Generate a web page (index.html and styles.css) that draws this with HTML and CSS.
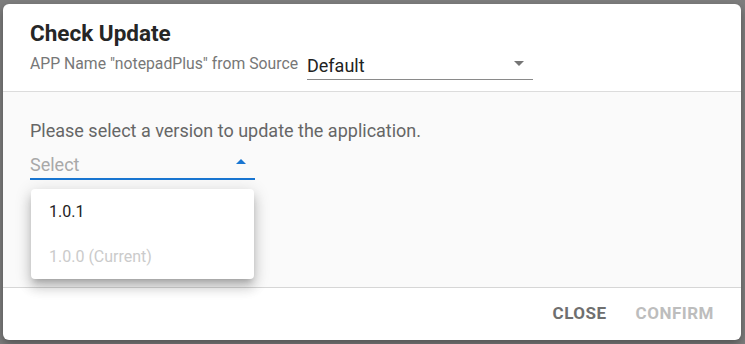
FILE: index.html
```html
<!DOCTYPE html>
<html>
<head>
<meta charset="utf-8">
<link rel="stylesheet" href="styles.css">
</head>
<body>
<div class="backdrop">
  <div class="dialog">
    <div class="head">
      <h2 class="title">Check Update</h2>
      <div class="source-row">
        <span class="source-label">APP Name "notepadPlus" from Source</span>
        <div class="source-select">
          <span>Default</span>
          <svg class="caret" width="10" height="5" viewBox="0 0 10 5"><path d="M0 0h10L5 5z" fill="#757575"/></svg>
        </div>
      </div>
    </div>
    <div class="body">
      <p class="prompt">Please select a version to update the application.</p>
      <div class="version-select">
        <span class="placeholder">Select</span>
        <svg class="caret up" width="10" height="5" viewBox="0 0 10 5"><path d="M0 5h10L5 0z" fill="#1976d2"/></svg>
      </div>
      <ul class="menu">
        <li class="item">1.0.1</li>
        <li class="item disabled">1.0.0 (Current)</li>
      </ul>
    </div>
    <div class="actions">
      <button class="btn">CLOSE</button>
      <button class="btn muted">CONFIRM</button>
    </div>
  </div>
</div>
</body>
</html>
```
FILE: styles.css
```css
* { box-sizing: border-box; }
html, body { margin: 0; padding: 0; }
body {
  font-family: Roboto, "Liberation Sans", sans-serif;
  background: #7e7e7e;
  width: 745px;
  height: 344px;
  overflow: hidden;
}
.backdrop {
  padding: 4px 4px 0 3px;
  height: 344px;
}
.dialog {
  width: 738px;
  height: 336px;
  background: #fff;
  border-radius: 6px;
  box-shadow: 0 4px 10px rgba(0,0,0,0.35);
  display: flex;
  flex-direction: column;
  overflow: hidden;
}
.head {
  padding: 14px 27px 0;
  height: 88px;
  flex: none;
  border-bottom: 1px solid #dcdcdc;
}
.title {
  margin: 0;
  font-size: 22.5px;
  font-weight: 700;
  line-height: 30px;
  color: #262626;
}
.source-row {
  display: flex;
  align-items: flex-end;
  margin-top: 2px;
  height: 30px;
}
.source-label {
  font-size: 15.75px;
  color: #777;
  line-height: 22px;
  padding-bottom: 5px;
}
.source-select {
  margin-left: 9px;
  width: 226px;
  height: 30px;
  border-bottom: 1px solid #8a8a8a;
  display: flex;
  align-items: center;
  justify-content: space-between;
  padding: 0 9px 0 0;
  font-size: 18px;
  color: #222;
}
.source-select span { padding-top: 1px; }
.source-select .caret { margin-top: -3px; }
.body {
  flex: none;
  height: 196px;
  background: #fafafa;
  padding: 27px 27px 0;
  border-bottom: 1px solid #d6d6d6;
  position: relative;
}
.prompt {
  margin: 0;
  font-size: 18px;
  line-height: 24px;
  color: #666;
}
.version-select {
  width: 225px;
  height: 37px;
  border-bottom: 2px solid #1976d2;
  display: flex;
  align-items: center;
  justify-content: space-between;
  padding: 8px 9px 0 0;
}
.placeholder { font-size: 18px; color: #a8a8a8; }
.version-select .caret { margin-top: -6px; }
.menu {
  position: absolute;
  left: 28px;
  top: 97px;
  width: 223px;
  margin: 0;
  padding: 0;
  list-style: none;
  background: #fff;
  border-radius: 4px;
  box-shadow: 0 5px 6px -3px rgba(0,0,0,0.2), 0 9px 12px 1px rgba(0,0,0,0.14), 0 3px 16px 2px rgba(0,0,0,0.12);
}
.item {
  height: 45px;
  line-height: 45px;
  padding-left: 18px;
  font-size: 16px;
  color: #222;
}
.item.disabled { color: #cbcbcb; }
.actions {
  flex: 1;
  display: flex;
  justify-content: flex-end;
  align-items: center;
  padding: 0 17px 2px 0;
  gap: 9px;
}
.btn {
  border: none;
  background: none;
  font-family: Roboto, "Liberation Sans", sans-serif;
  font-size: 17px;
  font-weight: 700;
  letter-spacing: 0.5px;
  color: #6f6f6f;
  padding: 6px 10px;
}
.btn.muted { color: #bdbdbd; }
```
